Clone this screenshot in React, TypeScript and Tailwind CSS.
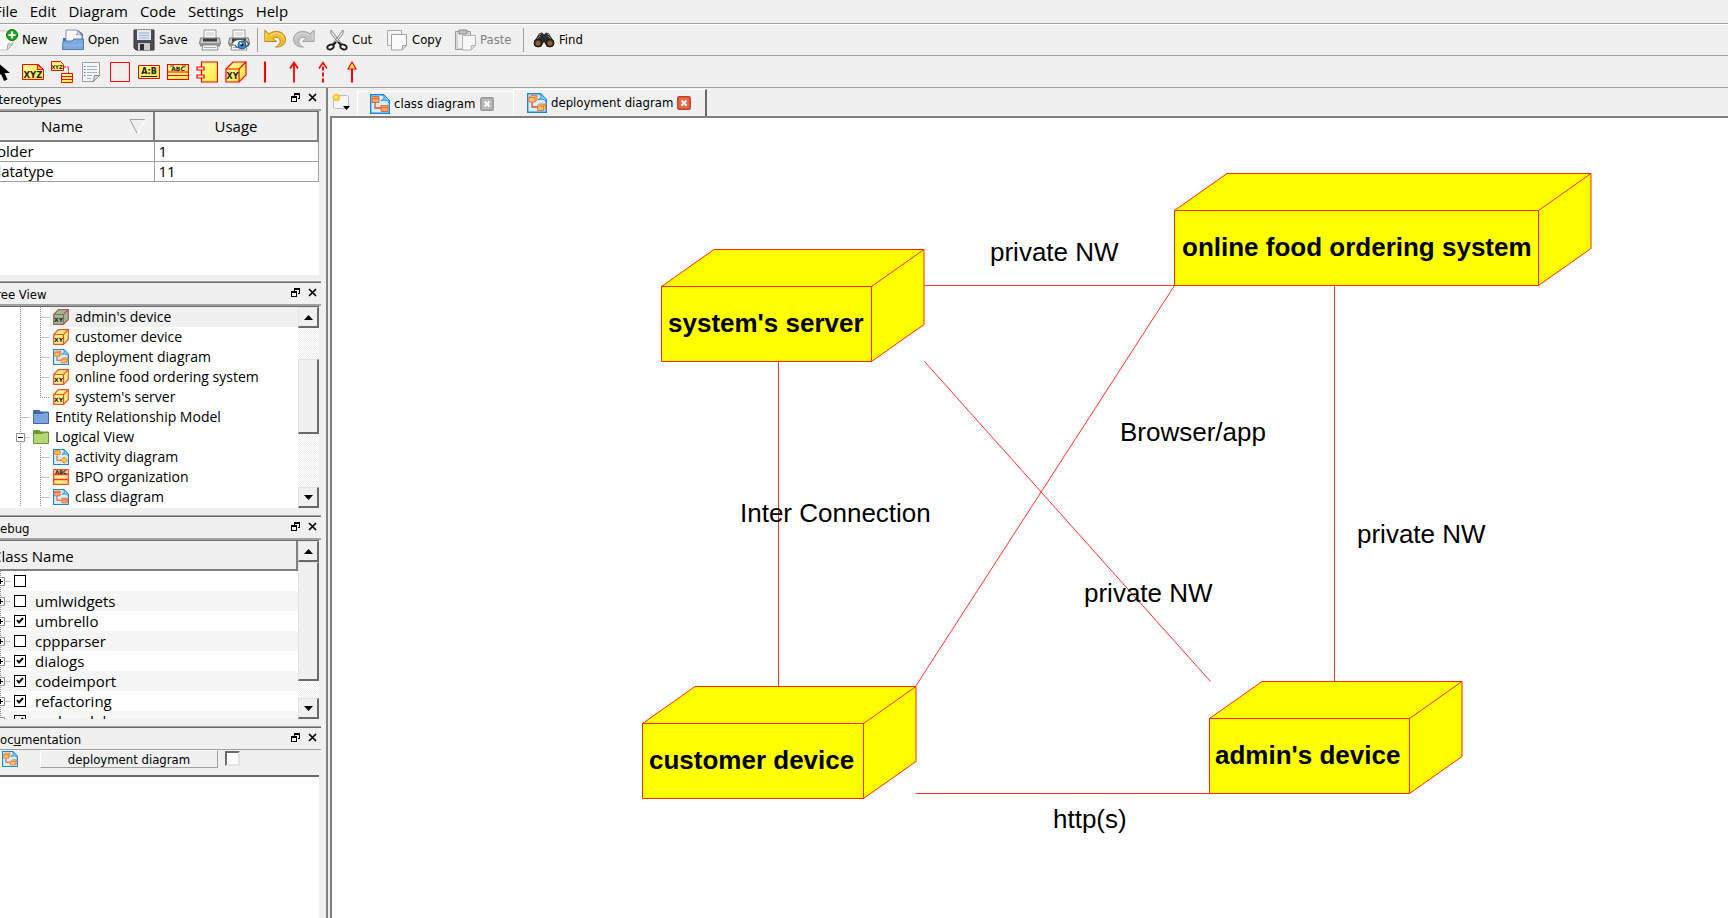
import React from "react";

const UI = "font-['Open_Sans','Noto_Sans',sans-serif]";
const TAHOMA = "font-['DejaVu_Sans_Condensed','DejaVu_Sans',sans-serif]";

type SvgProps = { children: React.ReactNode; w?: number; h?: number; box?: string };

function Svg({ children, w = 22, h = 22, box }: SvgProps) {
  return (
    <svg width={w} height={h} viewBox={box ?? `0 0 ${w} ${h}`} className="block shrink-0" aria-hidden="true">
      {children}
    </svg>
  );
}

/* ---------- toolbar icons ---------- */

const NewIcon = () => (
  <Svg w={26}>
    <path d="M4 2h17v13l-6 6H4z" fill="#fafafa" stroke="#c5c5c5" />
    <path d="M21 15h-5l-1 6z" fill="#dedede" stroke="#a5a5a5" />
    <circle cx="20" cy="6" r="5.500" fill="#16a616" stroke="#0b7d12" />
    <path d="M20 2.500v7M16.500 6h7" stroke="#fff" strokeWidth="2.200" />
  </Svg>
);

const OpenIcon = () => (
  <Svg>
    <path d="M1 9h4V1h11l5 4v10H1z" fill="#3d6ea8" />
    <path d="M4 1h11l5 5v9H4z" fill="#f7f8fb" stroke="#8a97a8" />
    <path d="M15 1c1 2 0 4-1 5 3-1 5 0 6 1z" fill="#dfe4ea" stroke="#8a97a8" strokeWidth=".8" />
    <path d="M1 12h9l2-2h9.500v10.500H.5z" fill="#7ea9dc" stroke="#4b79b3" />
    <path d="M1 16h20" stroke="#94bae6" />
  </Svg>
);

const SaveIcon = () => (
  <Svg>
    <path d="M1 1h20v20H3l-2-2z" fill="#4c4d52" stroke="#303136" />
    <path d="M4 1h14v10H4z" fill="#dfe8f3" />
    <path d="M6 4h10M6 6.500h10M6 9h10" stroke="#9db3cd" />
    <path d="M5 14h12v7H5z" fill="#c9cbd0" />
    <path d="M7 15h4v6H7z" fill="#2f3035" />
  </Svg>
);

const Printer = () => (
  <>
    <path d="M5 1h12v9H5z" fill="#fbfbfb" stroke="#9a9a9a" />
    <path d="M7 4h8M7 6h8" stroke="#c5c5c5" />
    <path d="M1.500 9h19l1 6H.5z" fill="#c9c9c9" stroke="#777" />
    <path d="M4 9.500h14v3H4z" fill="#3c3c3c" />
    <path d="M1 14.500h20v3H1z" fill="#8b8b8b" />
    <path d="M4 16h14l1 5H3z" fill="#f6f6f6" stroke="#909090" />
    <path d="M5 18.500h12" stroke="#aaa" />
  </>
);

const PrintIcon = () => (
  <Svg>
    <Printer />
  </Svg>
);

const PreviewIcon = () => (
  <Svg>
    <Printer />
    <path d="M4 14c4-5 12-5 17 1-4 5-12 5-14 1" fill="#f3f7fb" stroke="#555" strokeWidth="1.300" />
    <circle cx="14" cy="16" r="4" fill="#3f8fd0" stroke="#20608f" />
    <circle cx="14" cy="16" r="1.600" fill="#123" />
    <circle cx="12.800" cy="14.500" r=".9" fill="#fff" />
  </Svg>
);

function TurnArrow({ fill, edge, flip }: { fill: string; edge: string; flip?: boolean }) {
  return (
    <Svg>
      <g transform={flip ? "translate(22 0) scale(-1 1)" : undefined}>
        <path
          d="M.8 1v11.500h11.700L8.800 9.300C11.500 7.500 15 8 16 11c.8 3-1.200 5.500-4.500 7 6 .7 10.200-3 10-8C21.200 3.500 12.500-.5 5 4.800z"
          fill={fill}
          stroke={edge}
          strokeWidth="1"
          strokeLinejoin="round"
        />
        <path d="M2 4v7M6 6.500C11 2.500 18 4 19.500 9" fill="none" stroke="#fff" strokeOpacity=".45" />
      </g>
    </Svg>
  );
}

const CutIcon = () => (
  <Svg>
    <path d="M5 1c-.5 3 0 4 1 5l9 11 1.500-1.500zM17 1c.5 3 0 4-1 5L7.500 17 6 15.500z" fill="#e9e9e9" stroke="#7c7c7c" strokeWidth=".9" />
    <ellipse cx="4.500" cy="18" rx="3.300" ry="2.300" transform="rotate(-25 4.500 18)" fill="none" stroke="#1c1c1c" strokeWidth="1.800" />
    <ellipse cx="17.500" cy="18" rx="3.300" ry="2.300" transform="rotate(25 17.500 18)" fill="none" stroke="#1c1c1c" strokeWidth="1.800" />
    <path d="M7 16l3-3M15 16l-3-3" stroke="#1c1c1c" strokeWidth="2" />
  </Svg>
);

const CopyIcon = () => (
  <Svg>
    <path d="M1.500 1.500h14v15h-14z" fill="#f4f4f4" stroke="#a9a9a9" />
    <path d="M5.500 5.500h15v11l-4.500 4.500H5.500z" fill="#fbfbfb" stroke="#a0a0a0" />
    <path d="M20.500 16.500h-4l-.5 4.500z" fill="#e2e2e2" stroke="#a0a0a0" />
  </Svg>
);

const PasteIcon = () => (
  <Svg>
    <path d="M1.500 2.500h15v18h-15z" fill="#d6d6d6" stroke="#9a9a9a" />
    <path d="M4 5h10v14H4z" fill="#f2f2f2" />
    <path d="M5 1h8v4H5z" fill="#bfbfbf" stroke="#8d8d8d" />
    <path d="M8.500 6.500h13v10l-4.500 4.500H8.500z" fill="#f7f7f7" stroke="#b3b3b3" />
    <path d="M21.500 16.500h-4l-.5 4.500z" fill="#e2e2e2" stroke="#b3b3b3" />
  </Svg>
);

const FindIcon = () => (
  <Svg>
    <path d="M6 4.500l3-1 2 2 2-2 3 1 4.500 7.500v4l-6.500 2-3-5-3 5-6.500-2v-4z" fill="#2d2d2d" />
    <path d="M6 6l2-1M14 5l3 1M4 10l3-3M18 10l-3-3" stroke="#8d8d8d" />
    <circle cx="5" cy="14" r="4" fill="#3a3a3a" stroke="#151515" />
    <circle cx="17" cy="14" r="4" fill="#3a3a3a" stroke="#151515" />
    <circle cx="5" cy="14.300" r="2.200" fill="#a65b22" />
    <circle cx="17" cy="14.300" r="2.200" fill="#a65b22" />
  </Svg>
);

/* ---------- diagram tool icons ---------- */

function Tiny({ x, y, size, children }: { x: number; y: number; size: number; children: string }) {
  return (
    <text x={x} y={y} fontSize={size} fontWeight="700" textAnchor="middle" fontFamily="DejaVu Sans, sans-serif" fill="#222">
      {children}
    </text>
  );
}

const YELLOW = "url(#tool-yellow)";

const tools: { name: string; icon: React.ReactNode }[] = [
  {
    name: "Select",
    icon: <path d="M4 1v16l4-4 3 7 3.500-1.500-3-6.500H17z" fill="#000" />,
  },
  {
    name: "Object",
    icon: (
      <>
        <path d="M.5 3.500h16l5 5v10H.5z" fill={YELLOW} stroke="red" />
        <path d="M15 3.500c1 2 1 3 0 5h6.500z" fill="#ffd21a" stroke="red" />
        <Tiny x={11} y={16.500} size={8.500}>XYZ</Tiny>
      </>
    ),
  },
  {
    name: "Instance association",
    icon: (
      <>
        <path d="M.5.5h9l3 3v6H.5z" fill={YELLOW} stroke="red" />
        <Tiny x={6} y={8} size={5}>XYZ</Tiny>
        <path d="M13 6h4.500v6" fill="none" stroke="red" strokeDasharray="2 1" />
        <path d="M10.500 12.500h11v9h-11zM10.500 15.500h11M10.500 18.500h11" fill={YELLOW} stroke="red" />
      </>
    ),
  },
  {
    name: "Note",
    icon: (
      <>
        <path d="M2.500 1.500h17v13l-6 6h-11z" fill="#f2f6f7" stroke="#9c9c9c" />
        <path d="M19.500 14.500h-5l-1 6z" fill="#d5dcde" stroke="#888" />
        <path d="M7 5.500h10M7 8.500h10M7 11.500h10M7 14.500h5M7 17.500h4" stroke="#a3b3ba" />
        <path d="M4 5.500h1.500M4 8.500h1.500M4 11.500h1.500M4 14.500h1.500" stroke="#777" />
      </>
    ),
  },
  { name: "Box", icon: <path d="M1.500 1.500h19v19h-19z" fill="none" stroke="red" /> },
  {
    name: "Instance",
    icon: (
      <>
        <path d="M.5 4.500h21v13H.5z" fill={YELLOW} stroke="red" />
        <Tiny x={11} y={13} size={8}>A:B</Tiny>
        <path d="M3 15.500h16" stroke="#222" />
      </>
    ),
  },
  {
    name: "Class",
    icon: (
      <>
        <path d="M.5 3.500h21v15H.5zM.5 11h21M.5 14.500h21" fill={YELLOW} stroke="red" strokeWidth="1.200" />
        <Tiny x={11} y={10} size={6}>ABC</Tiny>
        <path d="M3 5h4M15 5h4" stroke="#444" />
      </>
    ),
  },
  {
    name: "Component",
    icon: (
      <>
        <path d="M5.500 1h16v20h-16z" fill={YELLOW} stroke="red" strokeWidth="1.200" />
        <path d="M1 6h7v3H1zM1 14h7v3H1z" fill="#fff3c0" stroke="red" strokeWidth="1.200" />
      </>
    ),
  },
  {
    name: "Node",
    icon: (
      <>
        <path d="M1 8l7-7h13v13l-7 7H1z" fill={YELLOW} stroke="red" strokeWidth="1.200" />
        <path d="M1 8h13v13M14 8l7-7" fill="none" stroke="red" strokeWidth="1.200" />
        <Tiny x={7.5} y={18} size={8}>XY</Tiny>
      </>
    ),
  },
  { name: "Association", icon: <path d="M11 .5v21" stroke="red" strokeWidth="2" /> },
  { name: "Directed association", icon: <path d="M11 21.500V2M7 7.500l4-6 4 6" fill="none" stroke="red" strokeWidth="1.800" /> },
  {
    name: "Dependency",
    icon: (
      <>
        <path d="M11 21.500V3" stroke="red" strokeWidth="2" strokeDasharray="4 2" />
        <path d="M7 7.500l4-6 4 6" fill="none" stroke="red" strokeWidth="1.500" />
      </>
    ),
  },
  {
    name: "Generalization",
    icon: (
      <>
        <path d="M11 21.500V7" stroke="red" strokeWidth="2" />
        <path d="M7 8l4-7 4 7z" fill="#ffe94a" stroke="red" strokeWidth="1.200" />
      </>
    ),
  },
];

/* ---------- tree icons ---------- */

function NodeIcon({ dim = false }: { dim?: boolean }) {
  const line = dim ? "#a2605c" : "#f4511e";
  return (
    <Svg w={16} h={16}>
      <path d="M.7 5.500L5.500.7h9.800v9.800l-4.800 4.800H.7z" fill={dim ? "#9dbb98" : "#fff08a"} stroke={line} strokeWidth="1.200" />
      <path d="M.7 5.500h9.800v9.800M10.500 5.500L15.300.7" fill="none" stroke={line} strokeWidth="1.200" />
      <Tiny x={5.5} y={13} size={6}>XY</Tiny>
    </Svg>
  );
}

function DiagramIcon({ size = 16, kind = "class" }: { size?: number; kind?: "class" | "activity" | "deployment" }) {
  return (
    <Svg w={size} h={size} box="0 0 20 20">
      <path d="M.7.7h12.600l6 6v12.600H.7z" fill="#d6f0fb" stroke="#1a86e0" strokeWidth="1.400" />
      <path d="M12 .7c3 1.500 3 4-1 6 4-1.500 7 0 8.300 2V6.500L14 .7z" fill="#8fd0f5" stroke="#1a86e0" />
      <path d="M5 8v6h6" fill="none" stroke="#ea4b22" strokeWidth="1.300" />
      {kind === "class" && (
        <>
          <path d="M2 2.500h7v6H2zM11 11.500h7v6h-7z" fill="#f9a869" stroke="#e8693a" />
          <path d="M2 4.500h7M11 13.500h7" stroke="#e8693a" />
        </>
      )}
      {kind === "deployment" && (
        <>
          <path d="M2 4.500L4 2.500h6v4.500l-2 2H2zM10.500 13l2-2h6v4.500l-2 2h-6z" fill="#ffc46a" stroke="#ee7a3a" />
          <path d="M2 4.500h6V9M8 4.500l2-2M10.500 13h6v4.500M16.500 13l2-2" fill="none" stroke="#ee7a3a" />
        </>
      )}
      {kind === "activity" && (
        <>
          <rect x="1.500" y="2" width="8" height="5" rx="2.500" fill="#ffc31e" stroke="#e8693a" />
          <path d="M14 10l4 4-4 4-4-4z" fill="#ffd31e" stroke="#ea4b22" />
        </>
      )}
    </Svg>
  );
}

function FolderIcon({ color, dark }: { color: string; dark: string }) {
  return (
    <Svg w={16} h={16}>
      <path d="M.5 1.500h6l1 1.500h8v3H.5z" fill={dark} stroke={dark} />
      <path d="M.5 4.500h9l1.500-1h4.500v11H.5z" fill={color} stroke={dark} />
    </Svg>
  );
}

const ClassIcon = () => (
  <Svg w={16} h={16}>
    <path d="M.7.7h14.600v14.600H.7z" fill="#fff08a" stroke="#f4511e" strokeWidth="1.300" />
    <path d="M1 1h14v4H1z" fill="#f9c08a" />
    <path d="M.7 5.500h14.600M.7 10.500h14.600" stroke="#f33" strokeWidth="1.300" />
    <Tiny x={8} y={5} size={5}>ABC</Tiny>
  </Svg>
);

/* ---------- shared pieces ---------- */

function Panel({ title, first, children }: { title: React.ReactNode; first?: boolean; children: React.ReactNode }) {
  return (
    <>
      {!first && <div className="h-[2px] shrink-0 border-t border-[#a0a0a0] bg-[#696969]" />}
      <header className={`flex h-[21px] shrink-0 items-center justify-between pr-1 text-[13px] ${TAHOMA}`}>
        <h2 className="-ml-px pt-[2px] leading-none">{title}</h2>
        <div className="flex gap-2 pb-[2px]">
          <button type="button" aria-label="Float panel">
            <Svg w={9} h={9}>
              <path d="M3 0h6v6H7V5h1V2H4v1H3zM0 3h6v6H0zM1 5v3h4V5z" fill="#000" fillRule="evenodd" />
            </Svg>
          </button>
          <button type="button" aria-label="Close panel">
            <Svg w={9} h={9}>
              <path d="M1 1l7 7M8 1L1 8" stroke="#000" strokeWidth="1.700" />
            </Svg>
          </button>
        </div>
      </header>
      {children}
    </>
  );
}

const frame = "mr-[2px] shrink-0 overflow-hidden border-t border-[#696969] bg-white";
const rule = "h-[2px] shrink-0 bg-[#a0a0a0]";
const raised = "border-t border-l border-t-[#e3e3e3] border-l-[#e3e3e3] border-r-2 border-b-2 border-r-[#696969] border-b-[#696969] bg-[#f0f0f0]";

function ScrollBar({ thumb }: { thumb: string }) {
  return (
    <div className="flex w-[21px] shrink-0 flex-col bg-[repeating-conic-gradient(#ffffff_0_25%,#ececec_0_50%)] bg-[length:2px_2px]">
      <button type="button" aria-label="Scroll up" className={`flex h-[21px] items-center justify-center ${raised}`}>
        <Svg w={9} h={5}><path d="M4.500 0L9 5H0z" /></Svg>
      </button>
      <div className="flex-1">
        <div className={`${thumb} ${raised}`} />
      </div>
      <button type="button" aria-label="Scroll down" className={`flex h-[21px] items-center justify-center ${raised}`}>
        <Svg w={9} h={5}><path d="M0 0h9L4.500 5z" /></Svg>
      </button>
    </div>
  );
}

function Branch({ d, box }: { d: string; box?: "plus" | "minus" }) {
  return (
    <Svg w={20} h={20}>
      <path d={d} fill="none" stroke="#909090" strokeDasharray="1 1" />
      {box && (
        <>
          <path d="M6.500 6.500h8v8h-8z" fill="#fff" stroke="#909090" />
          <path d={box === "plus" ? "M8 10.500h5M10.500 8v5" : "M8 10.500h5"} stroke="#000" />
        </>
      )}
    </Svg>
  );
}

const THROUGH = "M10.500 0v20";
const TEE = "M10.500 0v20M10.500 10.500H20";
const ELBOW = "M10.500 0v10.500H20";

type TreeRow = { label: string; cells: string[]; box?: "minus"; icon: React.ReactNode; selected?: boolean };

const tree: TreeRow[] = [
  { label: "admin's device", cells: [THROUGH, TEE], icon: <NodeIcon dim />, selected: true },
  { label: "customer device", cells: [THROUGH, TEE], icon: <NodeIcon /> },
  { label: "deployment diagram", cells: [THROUGH, TEE], icon: <DiagramIcon kind="deployment" /> },
  { label: "online food ordering system", cells: [THROUGH, TEE], icon: <NodeIcon /> },
  { label: "system's server", cells: [THROUGH, ELBOW], icon: <NodeIcon /> },
  { label: "Entity Relationship Model", cells: [TEE], icon: <FolderIcon color="#7ba5dc" dark="#3f6aa5" /> },
  { label: "Logical View", cells: [TEE], box: "minus", icon: <FolderIcon color="#b5d66e" dark="#6f9440" /> },
  { label: "activity diagram", cells: [THROUGH, TEE], icon: <DiagramIcon kind="activity" /> },
  { label: "BPO organization", cells: [THROUGH, TEE], icon: <ClassIcon /> },
  { label: "class diagram", cells: [THROUGH, TEE], icon: <DiagramIcon /> },
];

const debugRows: { label: string; on: boolean }[] = [
  { label: "", on: false },
  { label: "umlwidgets", on: false },
  { label: "umbrello", on: true },
  { label: "cppparser", on: false },
  { label: "dialogs", on: true },
  { label: "codeimport", on: true },
  { label: "refactoring", on: true },
  { label: "umlmodel", on: true },
];

/* ---------- canvas ---------- */

type Cube = { label: string; x: number; y: number; w: number; tx: number };

const cubes: Cube[] = [
  { label: "system's server", x: 661, y: 286, w: 210, tx: 668 },
  { label: "online food ordering system", x: 1174, y: 210, w: 364, tx: 1182 },
  { label: "customer device", x: 642, y: 723, w: 221, tx: 649 },
  { label: "admin's device", x: 1209, y: 718, w: 200, tx: 1215 },
];

const links = [
  [924, 285, 1174, 285],
  [778, 361, 778, 686],
  [924, 361, 1210, 681],
  [1174, 285, 915, 686],
  [1334, 285, 1334, 681],
  [915, 793, 1209, 793],
];

const labels: [string, number, number][] = [
  ["private NW", 990, 261],
  ["Browser/app", 1120, 441],
  ["Inter Connection", 740, 522],
  ["private NW", 1357, 543],
  ["private NW", 1084, 602],
  ["http(s)", 1053, 828],
];

function Canvas() {
  return (
    <svg
      width="1396"
      height="800"
      viewBox="332 118 1396 800"
      className="block"
      role="img"
      aria-label="Deployment diagram"
      fontFamily="Liberation Sans, Arial, sans-serif"
      fontSize="26"
    >
      <g stroke="#ff3030" fill="none" transform="translate(.5 .5)">
        {links.map(([a, b, c, d]) => (
          <path key={`${a}-${b}-${c}-${d}`} d={`M${a} ${b}L${c} ${d}`} />
        ))}
      </g>
      {cubes.map(({ label, x, y, w, tx }) => (
        <g key={label}>
          <g fill="#ff0" stroke="#ff2a00" transform="translate(.5 .5)">
            <path d={`M${x} ${y}l52.500-37h${w}v75l-52.500 37h-${w}z`} />
            <path d={`M${x} ${y}h${w}v75M${x + w} ${y}l52.500-37`} fill="none" />
          </g>
          <text x={tx} y={y + 46} fontWeight="700">{label}</text>
        </g>
      ))}
      {labels.map(([text, x, y]) => (
        <text key={`${x}-${y}`} x={x} y={y}>{text}</text>
      ))}
    </svg>
  );
}

function ToolButton({ icon, label, className, disabled }: { icon: React.ReactNode; label: string; className?: string; disabled?: boolean }) {
  return (
    <button type="button" disabled={disabled} className={`flex items-center gap-1 ${disabled ? "text-[#808080]" : ""} ${className ?? ""}`}>
      {icon}
      {label}
    </button>
  );
}

function TabClose({ name, active }: { name: string; active?: boolean }) {
  return (
    <button type="button" aria-label={`Close ${name}`}>
      <Svg w={14} h={14}>
        <rect x=".8" y=".8" width="12.400" height="12.400" rx="1.500" fill={active ? "#e26a4c" : "#b9b9b9"} stroke={active ? "#cf3a20" : "#979797"} strokeWidth="1.500" />
        <path d="M4.500 4.500l5 5M9.500 4.500l-5 5" stroke="#fff" strokeWidth="2" />
      </Svg>
    </button>
  );
}

export default function App() {
  return (
    <div className="overflow-hidden">
      <div className={`-ml-2 flex min-h-screen flex-col bg-[#f0f0f0] text-[15px] text-black ${UI}`}>
        <svg width="0" height="0" className="absolute" aria-hidden="true">
          <defs>
            <linearGradient id="tool-yellow" x1="0" y1="0" x2="1" y2="1">
              <stop offset="0" stopColor="#ffff9c" />
              <stop offset="1" stopColor="#ffe838" />
            </linearGradient>
          </defs>
        </svg>

        <nav className="flex h-6 shrink-0 items-center gap-3 border-b border-[#a0a0a0] pl-[2px]">
          {["File", "Edit", "Diagram", "Code", "Settings", "Help"].map((m) => (
            <button key={m} type="button" className="leading-none">{m}</button>
          ))}
        </nav>

        <div role="toolbar" aria-label="Main" className={`flex h-8 shrink-0 items-center border-t border-b border-t-white border-b-[#a0a0a0] text-[13px] ${TAHOMA}`}>
          <ToolButton icon={<NewIcon />} label="New" className="w-[70px]" />
          <ToolButton icon={<OpenIcon />} label="Open" className="w-[71px]" />
          <ToolButton icon={<SaveIcon />} label="Save" className="w-[66px]" />
          <button type="button" aria-label="Print" className="w-[29px]"><PrintIcon /></button>
          <button type="button" aria-label="Print preview" className="w-[29px]"><PreviewIcon /></button>
          <div className="mr-[6px] h-6 w-px bg-[#a0a0a0]" />
          <button type="button" aria-label="Undo" className="w-[29px]"><TurnArrow fill="#efbf3a" edge="#c08a14" /></button>
          <button type="button" aria-label="Redo" className="w-[33px]"><TurnArrow fill="#c4c4c4" edge="#a5a5a5" flip /></button>
          <ToolButton icon={<CutIcon />} label="Cut" className="w-[60px]" />
          <ToolButton icon={<CopyIcon />} label="Copy" className="w-[68px]" />
          <ToolButton icon={<PasteIcon />} label="Paste" className="w-[69px]" disabled />
          <div className="mr-[9px] h-6 w-px bg-[#a0a0a0]" />
          <ToolButton icon={<FindIcon />} label="Find" />
        </div>

        <div role="toolbar" aria-label="Diagram tools" className="flex h-8 shrink-0 items-center border-b border-[#a0a0a0] pl-px">
          {tools.map(({ name, icon }) => (
            <button key={name} type="button" aria-label={name} className="w-[29px]">
              <Svg>{icon}</Svg>
            </button>
          ))}
        </div>

        <div className="flex flex-1">
          <aside className="flex w-[329px] shrink-0 flex-col">
            <Panel title="Stereotypes" first>
              <div className={rule} />
              <div className={`mb-[6px] h-[164px] ${frame}`}>
                <table className="w-full border-collapse text-left">
                  <thead>
                    <tr className="h-[29px] bg-[#f0f0f0]">
                      <th className="w-[162px] border-r-2 border-b-2 border-[#808080] p-0 pt-px text-center font-normal leading-none">
                        <div className="flex items-start justify-end gap-[46px] pr-[7px]">
                          <span>Name</span>
                          <Svg w={17} h={16}>
                            <path d="M8.500 15L1 .5h15" fill="none" stroke="#a0a0a0" />
                            <path d="M16 .5L8.500 15" stroke="#fff" />
                          </Svg>
                        </div>
                      </th>
                      <th className="border-r-2 border-b-2 border-[#808080] p-0 pt-px text-center font-normal leading-none">Usage</th>
                    </tr>
                  </thead>
                  <tbody>
                    {[["folder", "1"], ["datatype", "11"]].map(([name, usage]) => (
                      <tr key={name} className="h-5">
                        <td className="border-r border-b border-[#a0a0a0] p-0 leading-[19px]">{name}</td>
                        <td className="border-r border-b border-[#a0a0a0] p-0 pl-1 leading-[19px]">{usage}</td>
                      </tr>
                    ))}
                  </tbody>
                </table>
              </div>
            </Panel>

            <Panel title="Tree View">
              <div className={rule} />
              <div className={`mb-[7px] flex h-[202px] ${frame}`}>
                <ul className="min-w-0 flex-1 pl-[18px] text-sm">
                  {tree.map(({ label, cells, box, icon, selected }) => (
                    <li key={label} className="flex h-5">
                      {cells.map((d, i) => (
                        <Branch key={i} d={d} box={box} />
                      ))}
                      <span className={`flex flex-1 items-center gap-[6px] whitespace-nowrap pl-[3px] leading-none ${selected ? "bg-[#f0f0f0]" : ""}`}>
                        {icon}
                        {label}
                      </span>
                    </li>
                  ))}
                </ul>
                <ScrollBar thumb="mt-[31px] h-[75px]" />
              </div>
            </Panel>

            <Panel title="Debug">
              <div className={rule} />
              <div className={`mb-[7px] flex h-[179px] ${frame}`}>
                <div className="min-w-0 flex-1 overflow-hidden">
                  <div className="flex h-[30px] items-center border-r-2 border-b-2 border-[#808080] bg-[#f0f0f0] pt-[2px] leading-none">Class Name</div>
                  <ul>
                    {debugRows.map(({ label, on }) => (
                      <li key={label} className="-ml-[2px] flex h-5 items-center even:bg-[#f5f5f5]">
                        <Branch d={TEE} box="plus" />
                        <label className="flex items-center gap-[9px] pl-1 leading-none">
                          <span className="relative size-3">
                            <input type="checkbox" defaultChecked={on} aria-label={label || "default"} className="peer block size-3 appearance-none border border-black bg-white" />
                            <svg viewBox="0 0 12 12" className="pointer-events-none absolute inset-0 hidden size-3 peer-checked:block" aria-hidden="true">
                              <path d="M3 5l2 2.500L9 3" fill="none" stroke="#000" strokeWidth="2" />
                            </svg>
                          </span>
                          {label}
                        </label>
                      </li>
                    ))}
                  </ul>
                </div>
                <ScrollBar thumb="h-[119px]" />
              </div>
            </Panel>

            <Panel title={<>Doc<u>u</u>mentation</>}>
              <div className={`flex h-[26px] shrink-0 items-start border-t border-[#a0a0a0] pl-[10px] text-[13px] ${TAHOMA}`}>
                <span className="mt-px"><DiagramIcon kind="deployment" /></span>
                <button type="button" className="ml-[22px] h-[18px] w-[178px] border border-t-white border-l-white border-r-[#a0a0a0] border-b-[#a0a0a0] leading-none">
                  deployment diagram
                </button>
                <input type="checkbox" aria-label="Lock documentation" className="mt-px ml-[7px] size-[15px] appearance-none border-2 border-t-[#696969] border-l-[#696969] border-r-[#e3e3e3] border-b-[#e3e3e3] bg-white" />
              </div>
              <textarea aria-label="Documentation" className="mr-[2px] block min-h-0 flex-1 resize-none border-t-2 border-[#696969] bg-white outline-none" />
            </Panel>
          </aside>

          <main className="ml-[5px] flex min-w-0 flex-1 flex-col border-l-2 border-[#808080]">
            <div className={`flex h-7 shrink-0 items-end pl-1 text-[13px] ${TAHOMA}`}>
              <button type="button" aria-label="New diagram" className="mb-1 w-[25px]">
                <Svg w={20} h={19}>
                  <rect x="1.500" y="2.500" width="15" height="13" rx="2" fill="#f7f7f7" stroke="#bcbcbc" />
                  <circle cx="4.500" cy="4.500" r="3.500" fill="#f7d038" stroke="#efb91a" strokeOpacity=".5" />
                  <circle cx="4" cy="4" r="1.300" fill="#fff6b0" />
                  <path d="M11 13h7l-3.500 4z" fill="#000" />
                </Svg>
              </button>
              <div className="flex h-[25px] w-[156px] items-center gap-1 border-t border-l border-white pl-3">
                <DiagramIcon size={20} />
                <span>class diagram</span>
                <span className="flex pl-px"><TabClose name="class diagram" /></span>
              </div>
              <div className="flex h-[27px] w-[194px] items-center gap-1 border-t border-l border-r-2 border-t-white border-l-white border-r-[#696969] pl-[13px]">
                <DiagramIcon size={20} kind="deployment" />
                <span>deployment diagram</span>
                <span className="flex"><TabClose name="deployment diagram" active /></span>
              </div>
            </div>
            <div className="ml-[2px] flex-1 overflow-hidden border-t-2 border-l-2 border-[#808080] bg-white">
              <Canvas />
            </div>
          </main>
        </div>
      </div>
    </div>
  );
}
